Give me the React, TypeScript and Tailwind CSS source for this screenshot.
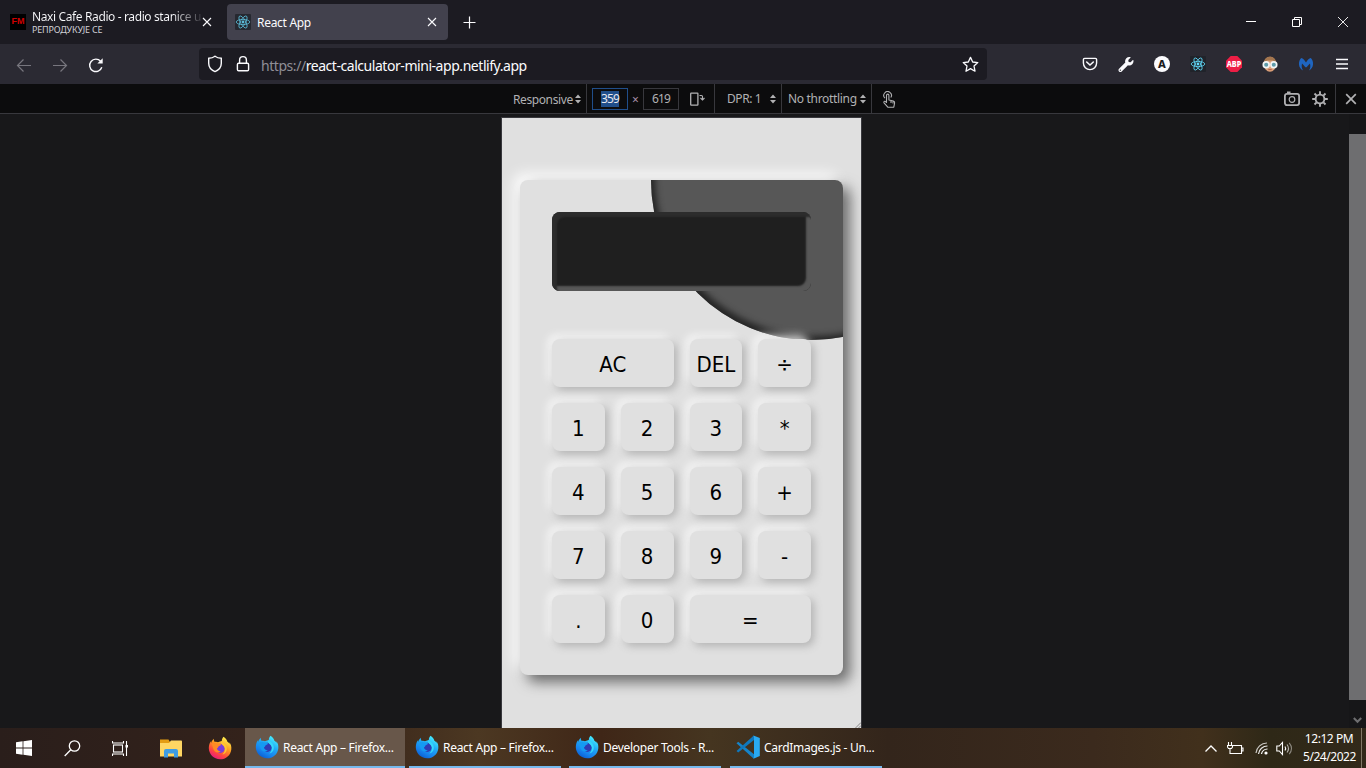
import React from "react";
import { FaWrench } from "react-icons/fa";

type IconProps = { className?: string };

const ReactLogo = ({ className = "" }: IconProps) => (
  <svg className={`shrink-0 ${className}`} width="16" height="16" viewBox="0 0 16 16">
    <rect width="16" height="16" rx="1" fill="#20232a" />
    <g fill="none" stroke="#61dafb" strokeWidth="0.8">
      <ellipse cx="8" cy="8" rx="6.8" ry="2.6" />
      <ellipse cx="8" cy="8" rx="6.8" ry="2.6" transform="rotate(60 8 8)" />
      <ellipse cx="8" cy="8" rx="6.8" ry="2.6" transform="rotate(120 8 8)" />
    </g>
    <circle cx="8" cy="8" r="1.4" fill="#61dafb" />
  </svg>
);

const Cross = ({ className = "" }: IconProps) => (
  <svg className={`shrink-0 ${className}`} width="10" height="10" viewBox="0 0 10 10" fill="none" stroke="currentColor" strokeWidth="1.1">
    <path d="M1 1l8 8M9 1l-8 8" />
  </svg>
);

const Sorter = () => (
  <svg className="shrink-0" width="6" height="10" viewBox="0 0 6 10" fill="#b1b1b3">
    <path d="M3 0.5L6 4H0zM3 9.5L0 6h6z" />
  </svg>
);

const FirefoxLogo = ({ dev = false }: { dev?: boolean }) => {
  const id = dev ? "foxDev" : "foxMain";
  return (
    <svg className="shrink-0" width="24" height="24" viewBox="0 0 24 24">
      <defs>
        <linearGradient id={id} x1="0.8" y1="0.05" x2="0.25" y2="1">
          <stop offset="0" stopColor={dev ? "#46f0ff" : "#fff44f"} />
          <stop offset="0.4" stopColor={dev ? "#20a8f5" : "#ff9a1f"} />
          <stop offset="0.72" stopColor={dev ? "#1683ee" : "#ff4540"} />
          <stop offset="1" stopColor={dev ? "#0a5bd0" : "#e31587"} />
        </linearGradient>
      </defs>
      <path
        d="M15.5 0.8C18 2.3 19 4.2 19.4 5.8C20.6 6.4 21.4 7.5 21.8 8.3C21.7 7.4 21.4 6.7 21.1 6.1C23.1 8.2 23.6 11 23.3 13.4C22.7 19.1 17.9 23.3 12.1 23.3C5.8 23.3 0.8 18.3 0.8 12.1C0.8 8.9 1.8 6.7 2.8 5.2C2.8 5.9 2.9 6.5 3.1 7C3.5 5.4 4.5 3.9 5.9 2.8C5.7 4.1 6.1 5.2 6.8 5.9C8 5.6 9.2 5.8 10 6.3C11.4 5.7 12.7 5.4 13.8 5.1C13.8 3.4 14.4 1.9 15.5 0.8Z"
        fill={`url(#${id})`}
      />
      <circle cx="12.3" cy="12.3" r="4.6" fill={dev ? "#2f3bb5" : "#7a3ddb"} />
      <path
        d="M3.8 8.1C5.6 6.7 8 6.5 9.5 7.6C11 7.5 12.5 8 13.2 8.8C12.6 9.8 11 10 10.5 10.5C10.1 11 10 11.8 9 12.3C9.1 14.4 11 15.5 13 15.1C11.6 16.7 8.8 16.9 7 15.4C4.8 13.8 4.8 10.2 3.8 8.1Z"
        fill={dev ? "#159af2" : "#ff8b24"}
      />
      <path
        d="M13.2 5.4C16.6 6.9 19 9.6 18.8 13.2C18.6 16 16.6 18 14.4 18.6C17.2 16.2 18 12 14.8 9.3C13.5 8.3 12.8 7 13.2 5.4Z"
        fill={dev ? "#35d8fa" : "#ffc531"}
      />
    </svg>
  );
};

const WindowsLogo = () => (
  <svg width="16" height="16" viewBox="0 0 16 16" fill="#fff">
    <path d="M0 2.2L6.6 1.3V7.5H0zM7.4 1.2L16 0V7.5H7.4zM0 8.4H6.6V14.7L0 13.8zM7.4 8.4H16V16L7.4 14.8z" />
  </svg>
);

const VsCodeLogo = () => (
  <svg className="shrink-0" width="24" height="24" viewBox="0 0 24 24">
    <path d="M0.5 8.2L2.2 6.7L18 19.2V23.6L17.2 23.2z" fill="#1583c8" />
    <path d="M0.5 16L2.2 17.4L18 5V0.5L17.2 1z" fill="#0f78bd" />
    <path d="M17.4 0.5L23.8 3V21L17.4 23.7C17.9 22.9 18 22.3 18 21V3C18 1.8 17.8 1.2 17.4 0.5z" fill="#29aaf2" />
  </svg>
);

function TabStrip() {
  return (
    <div className="flex h-11 items-center bg-[#1c1b22] text-[#fbfbfe]">
      <div className="flex h-9 w-[227px] items-center pl-[10px]">
        <div className="mr-[6px] flex h-4 w-4 shrink-0 items-center justify-center bg-black font-['Liberation_Sans'] text-[9px] font-bold text-[#d00000]">FM</div>
        <div className="w-[168px] pt-px whitespace-nowrap">
          <div className="w-fit bg-[linear-gradient(90deg,#fbfbfe_82%,#fbfbfe22_100%)] bg-clip-text text-[12px] leading-[15px] tracking-[-0.38px] text-transparent">Naxi Cafe Radio - radio stanice u</div>
          <div className="text-[9px] leading-[12px] tracking-[-0.2px] text-[#d0d0d6]">РЕПРОДУКУЈЕ СЕ</div>
        </div>
        <Cross className="ml-[2px]" />
      </div>
      <div className="flex h-9 w-[221px] items-center rounded bg-[#42414d] pr-[11px] pl-2">
        <ReactLogo className="opacity-80" />
        <span className="ml-[6px] flex-1 pt-[2px] text-[12px] tracking-[-0.3px]">React App</span>
        <Cross />
      </div>
      <svg className="ml-[15px]" width="13" height="13" viewBox="0 0 13 13" stroke="currentColor" strokeWidth="1.2">
        <path d="M6.5 0.5v12M0.5 6.5h12" />
      </svg>
      <div className="ml-auto flex items-center gap-[36px] pr-[18px] text-white">
        <svg width="10" height="10" viewBox="0 0 10 10" stroke="currentColor"><path d="M0 4.5h10" /></svg>
        <svg width="10" height="10" viewBox="0 0 10 10" stroke="currentColor" fill="none"><path d="M0.5 2.5h7v7h-7zM2.5 2.5v-2h7v7h-2" /></svg>
        <svg width="10" height="10" viewBox="0 0 10 10" stroke="currentColor" strokeWidth="0.9"><path d="M0 0L10 10M10 0L0 10" /></svg>
      </div>
    </div>
  );
}

function AddressBar() {
  return (
    <div className="flex h-10 items-center bg-[#2b2a33] text-[#fbfbfe]">
      <div className="flex w-[199px] items-center pt-px pl-4">
        <svg width="16" height="16" viewBox="0 0 16 16" fill="none" stroke="#77767e" strokeWidth="1.2"><path d="M15 8.5H1.5M7.5 2.5L1.5 8.5L7.5 14.5" /></svg>
        <svg className="ml-5" width="16" height="16" viewBox="0 0 16 16" fill="none" stroke="#77767e" strokeWidth="1.2"><path d="M1 8.5H14.5M8.5 2.5L14.5 8.5L8.5 14.5" /></svg>
        <svg className="ml-5" width="16" height="16" viewBox="0 0 16 16" fill="none" stroke="currentColor" strokeWidth="1.4"><path d="M13.8 10.2A6.2 6.2 0 1 1 12.6 4.3" /><path d="M14.7 1.2V6.5H9.4z" fill="currentColor" stroke="none" /></svg>
      </div>
      <div className="flex h-8 w-[788px] items-center rounded bg-[#1c1b22] pr-2 pl-2">
        <svg width="16" height="18" viewBox="0 0 16 18" fill="none" stroke="currentColor" strokeWidth="1.4"><path d="M8 1.2C9.8 2.6 11.8 3.2 14.3 3.3V8.3C14.3 12 12 15 8 16.6C4 15 1.7 12 1.7 8.3V3.3C4.2 3.2 6.2 2.6 8 1.2z" /></svg>
        <svg className="ml-3" width="16" height="18" viewBox="0 0 16 18" fill="none" stroke="currentColor" strokeWidth="1.4"><rect x="2.4" y="8.2" width="11.2" height="7.6" rx="1.2" /><path d="M4.6 8V5A3.4 3.4 0 0 1 11.4 5V8" /></svg>
        <span className="ml-[10px] flex-1 pt-[3px] text-[14px] tracking-[-0.45px]"><span className="text-[#8f8e96]">https://</span>react-calculator-mini-app.netlify.app</span>
        <svg width="17" height="17" viewBox="0 0 17 17" fill="none" stroke="currentColor" strokeWidth="1.3" strokeLinejoin="round"><path d="M8.5 1.4L10.7 6L15.8 6.6L12 10L13 15.2L8.5 12.6L4 15.2L5 10L1.2 6.6L6.3 6z" /></svg>
      </div>
      <div className="ml-auto flex items-center gap-5 pr-4">
        <svg width="16" height="16" viewBox="0 0 16 16" fill="none" stroke="currentColor" strokeWidth="1.4" strokeLinecap="round"><path d="M2.6 2.4H13.4A1.2 1.2 0 0 1 14.6 3.6V7A6.6 6.6 0 0 1 1.4 7V3.6A1.2 1.2 0 0 1 2.6 2.4z" /><path d="M4.7 6L8 9L11.3 6" strokeWidth="1.6" /></svg>
        <FaWrench className="h-[15px] w-4" />
        <span className="flex h-4 w-4 items-center justify-center rounded-full bg-[#fbfbfe] text-[11px] font-extrabold text-[#1c1b22]">A</span>
        <ReactLogo />
        <svg width="16" height="16" viewBox="0 0 16 16"><path d="M4.7 0H11.3L16 4.7V11.3L11.3 16H4.7L0 11.3V4.7z" fill="#ed1e45" /><text x="8" y="10.9" textAnchor="middle" textLength="14.5" lengthAdjust="spacingAndGlyphs" fontSize="8.2" fontWeight="800" fill="#fff">ABP</text></svg>
        <svg width="16" height="16" viewBox="0 0 16 16"><ellipse cx="8" cy="8.2" rx="6.2" ry="7.5" fill="#dca079" /><path d="M1.8 7C2 2.5 5 0.7 8 0.7S14 2.5 14.2 7L11 4.5H5z" fill="#a4764f" /><circle cx="4.2" cy="8.7" r="2.9" fill="#5f9cab" stroke="#f2f4f5" strokeWidth="1.7" /><circle cx="11.8" cy="8.7" r="2.9" fill="#5f9cab" stroke="#f2f4f5" strokeWidth="1.7" /><path d="M6.3 13.6h3.4" stroke="#b05c4c" /></svg>
        <svg width="16" height="16" viewBox="0 0 16 16" fill="#1f65c0"><path d="M3.2 2C5 2.2 6.8 4.5 8 6.4C9.2 4.5 11 2.2 12.8 2C14.3 3.6 15.3 5.8 15 8.4C14.8 11 13.3 13.3 10.8 14.5C12.5 12.2 12.6 10 12 7.4C10.6 8.6 9.5 10.4 8 11.6C6.5 10.4 5.4 8.6 4 7.4C3.4 10 3.6 12.3 5.2 14.5C2.7 13.3 1.2 11 1 8.4C0.8 5.8 1.7 3.6 3.2 2z" /></svg>
        <svg width="16" height="16" viewBox="0 0 16 16" stroke="currentColor" strokeWidth="1.3"><path d="M2 3.5h12M2 8h12M2 12.5h12" /></svg>
      </div>
    </div>
  );
}

function DeviceToolbar() {
  return (
    <div className="flex h-[30px] items-stretch border-b border-[#38383d] bg-[#0c0c0d] pl-[513px] text-[12px] text-[#b1b1b3]">
      <div className="flex w-[74px] items-center gap-[2px] border-r border-[#38383d]">
        <span className="w-[60px] pt-[2px] tracking-[-0.4px]">Responsive</span>
        <Sorter />
      </div>
      <div className="flex w-[128px] items-center border-r border-[#38383d] pl-[5px]">
        <span className="flex h-[22px] w-9 items-center justify-center border border-[#204e8a] pt-px"><span className="bg-[#204e8a] leading-4 tracking-[-0.8px] text-[#e8e8ee]">359</span></span>
        <span className="w-[15px] pt-[2px] text-center text-[#a78fa8]">×</span>
        <span className="flex h-[22px] w-9 items-center justify-center border border-[#38383d] pt-px tracking-[-0.8px]">619</span>
        <svg className="ml-[10px]" width="17" height="16" viewBox="0 0 17 16" fill="none" stroke="#b1b1b3" strokeWidth="1.3"><rect x="1.7" y="2.2" width="7.2" height="12" rx="0.5" /><path d="M10.5 4.5H12.5A1 1 0 0 1 13.5 5.5V8.5M11.5 7L13.5 9L15.5 7" strokeWidth="1.1" /></svg>
      </div>
      <div className="flex w-[67px] items-center border-r border-[#38383d] pl-3">
        <span className="w-[43px] tracking-[-0.4px]">DPR: 1</span>
        <Sorter />
      </div>
      <div className="flex w-[90px] items-center gap-[2px] border-r border-[#38383d] pl-[6px]">
        <span className="w-[70px] whitespace-nowrap tracking-[-0.32px]">No throttling</span>
        <Sorter />
      </div>
      <svg className="mt-[7px] ml-[9px]" width="16" height="18" viewBox="0 0 16 18" fill="none" stroke="#b1b1b3" strokeWidth="1.1" strokeLinejoin="round"><path d="M5.5 11.5V4.3A1.2 1.2 0 0 1 7.9 4.3V9L12.4 10C13.4 10.3 13.8 11 13.6 12L12.8 16.2H6.8L3 11.8C2.3 10.7 3.8 9.8 4.6 10.6zM10 9.5V12M12 10V12.4" /><path d="M4 7.2A3.8 3.8 0 1 1 9.8 6.5" /></svg>
      <div className="ml-auto flex items-center">
        <svg width="18" height="16" viewBox="0 0 18 16" fill="none" stroke="#b1b1b3" strokeWidth="1.8"><rect x="1.9" y="2.9" width="14.2" height="11.2" rx="2" /><circle cx="9" cy="8.5" r="2.8" strokeWidth="1.2" /><path d="M4 1.4h3.5" /></svg>
        <svg className="ml-[10px]" width="18" height="18" viewBox="0 0 18 18" fill="none" stroke="#b1b1b3" strokeWidth="1.9"><circle cx="9" cy="9" r="4.4" /><path d="M9 1.2v3M9 13.8v3M1.2 9h3M13.8 9h3M3.5 3.5l2.1 2.1M12.4 12.4l2.1 2.1M14.5 3.5l-2.1 2.1M5.6 12.4l-2.1 2.1" /></svg>
        <div className="ml-[6px] flex h-full w-[31px] items-center justify-center border-l border-[#38383d] pt-px text-[#b1b1b3]"><Cross className="scale-120 stroke-[1.4px]" /></div>
      </div>
    </div>
  );
}

const keys = ["AC", "DEL", "÷", "1", "2", "3", "*", "4", "5", "6", "+", "7", "8", "9", "-", ".", "0", "="];

function Calculator() {
  return (
    <div className="relative h-[495px] w-[323px] rounded-lg bg-[#e0e0e0] p-8 shadow-[7px_7px_14px_#6a6a6a,-6px_-6px_14px_#ffffff]">
      <div className="absolute inset-0 overflow-hidden rounded-lg">
        <div className="absolute top-[-160px] left-[131px] h-[320px] w-[320px] rounded-full bg-[#575757] shadow-[inset_4px_-4px_6px_#262626]" />
      </div>
      <div className="relative mb-12 h-[79px] rounded-lg bg-[#1f1f1f] shadow-[inset_5px_5px_2px_#2c2c2c,inset_-5px_-5px_2px_#575757]" />
      <div className="relative grid auto-rows-[48px] grid-cols-4 gap-4 font-['DejaVu_Sans_Condensed','DejaVu_Sans',sans-serif] text-[22px] text-black [font-stretch:condensed]">
        {keys.map((k) => (
          <button
            key={k}
            className={`flex min-w-0 items-center justify-center rounded-lg bg-[#e0e0e0] pt-[2px] shadow-[3px_3px_8px_#b2b2b2,-4px_-4px_8px_#ffffffc0] ${k === "AC" || k === "=" ? "col-span-2" : ""}`}
          >
            {k}
          </button>
        ))}
      </div>
    </div>
  );
}

function Workspace() {
  return (
    <div className="flex h-[614px] justify-between bg-[#18181a] pl-[501px]">
      <div className="relative mt-[3px] w-[361px] overflow-hidden border border-b-0 border-[#38383d] bg-[#e0e0e0] pt-[62px] pl-[18px]">
        <Calculator />
        <svg className="absolute right-0 bottom-0" width="6" height="6" viewBox="0 0 6 6" stroke="#888"><path d="M0.5 6L6 0.5M3.5 6L6 3.5" /></svg>
      </div>
      <div className="flex w-[17px] flex-col items-center bg-[#161618] pt-5">
        <div className="h-[566px] w-full bg-[#6e6e70]" />
        <svg className="mt-[17px]" width="9" height="7" viewBox="0 0 9 7" fill="none" stroke="#6e6e70" strokeWidth="2"><path d="M0.8 1L4.5 4.8L8.2 1" /></svg>
      </div>
    </div>
  );
}

const windows = [
  { title: "React App – Firefox...", icon: <FirefoxLogo dev />, box: "ml-[13px] w-[160px] bg-[#68574a] pl-[10px]" },
  { title: "React App – Firefox...", icon: <FirefoxLogo dev />, box: "ml-1 w-[152px] pl-[6px]" },
  { title: "Developer Tools - R...", icon: <FirefoxLogo dev />, box: "ml-2 w-[152px] pl-[6px]" },
  { title: "CardImages.js - Un...", icon: <VsCodeLogo />, box: "ml-[9px] w-[152px] pl-[6px]" },
];

function Taskbar() {
  return (
    <div className="flex h-10 items-center bg-[linear-gradient(90deg,#2a1e1b_0%,#31211b_14%,#38241a_25%,#4c3822_35%,#3f2617_44%,#453520_52%,#33251b_65%,#3b2a1d_80%,#41301c_88%,#2e2817_93%,#32291a_100%)] text-white">
      <div className="flex w-[232px] items-center pl-4">
        <WindowsLogo />
        <svg className="ml-8" width="17" height="17" viewBox="0 0 17 17" fill="none" stroke="currentColor" strokeWidth="1.3"><circle cx="10.5" cy="6" r="5.2" /><path d="M6.8 9.8L0.7 16" /></svg>
        <svg className="ml-[31px]" width="17" height="17" viewBox="0 0 17 17" fill="none" stroke="currentColor" strokeWidth="1.1"><rect x="1.5" y="5" width="9" height="7" /><path d="M0.5 1v2h11v-2M0.5 16v-2h11v2M14.5 1v15" /><rect x="13.5" y="5" width="2.5" height="2.5" fill="currentColor" stroke="none" /></svg>
        <svg className="ml-[31px]" width="22" height="20" viewBox="0 0 22 20"><path d="M0 1.5H8.5L10 4V18H0z" fill="#e49d13" /><path d="M0 5H9L11 2.5H21C21.7 2.5 22 3 22 3.5V18.5H0z" fill="#ffd663" /><path d="M4 19.5V13Q4 11 6 11H16Q18 11 18 13V19.5H14V15.5H8V19.5z" fill="#3f9ce3" /></svg>
        <div className="ml-[26px]"><FirefoxLogo /></div>
      </div>
      {windows.map((w, i) => (
        <div key={i} className={`flex h-10 items-center border-b-2 border-[#76b9ed] ${w.box}`}>
          {w.icon}
          <span className="ml-1 whitespace-nowrap pt-px text-[12px] tracking-[-0.28px]">{w.title}</span>
        </div>
      ))}
      <div className="ml-auto flex h-10 items-center">
        <svg width="12" height="7" viewBox="0 0 12 7" fill="none" stroke="currentColor" strokeWidth="1.3"><path d="M0.5 6.5L6 1L11.5 6.5" /></svg>
        <svg className="ml-[10px]" width="17" height="13" viewBox="0 0 17 13" fill="none" stroke="currentColor" strokeWidth="1.1"><path d="M5 3.5H14.5V11.5H3V7M14.5 6h1.5v3h-1.5M1.5 0V3M4.5 0V3M0.5 3.5H5.5V5L4.5 6.5H1.5L0.5 5zM3 6.5V9" /></svg>
        <svg className="ml-[11px]" width="14" height="14" viewBox="0 0 14 14" fill="none" stroke="currentColor" strokeWidth="1.2"><path d="M1 12A11 11 0 0 1 12 2" opacity="0.75" /><path d="M3.5 13A9 9 0 0 1 12.5 5" opacity="0.9" /><path d="M6.5 13A6 6 0 0 1 12.5 8" /><circle cx="11" cy="12" r="1.6" fill="currentColor" stroke="none" /></svg>
        <svg className="ml-[7px]" width="17" height="15" viewBox="0 0 17 15" fill="none" stroke="currentColor" strokeWidth="1.1"><path d="M0.8 5h2.5L6.5 1.5v12L3.3 10H0.8z" /><path d="M9 5.5Q10.3 7.5 9 9.5" /><path d="M11 3.5Q14 7.5 11 11.5" opacity="0.65" /><path d="M13.2 1.8Q17.8 7.5 13.2 13.2" opacity="0.45" /></svg>
        <div className="ml-[10px] w-[52px] whitespace-nowrap text-center text-[12px] leading-[18px] tracking-[-0.45px]">
          <div>12:12 PM</div>
          <div>5/24/2022</div>
        </div>
        <div className="mr-1 ml-[6px] h-10 w-px bg-[#817867]" />
      </div>
    </div>
  );
}

export default function App() {
  return (
    <div className="h-[768px] w-[1366px] overflow-hidden font-['Noto_Sans','Open_Sans',sans-serif]">
      <TabStrip />
      <AddressBar />
      <DeviceToolbar />
      <Workspace />
      <Taskbar />
    </div>
  );
}
